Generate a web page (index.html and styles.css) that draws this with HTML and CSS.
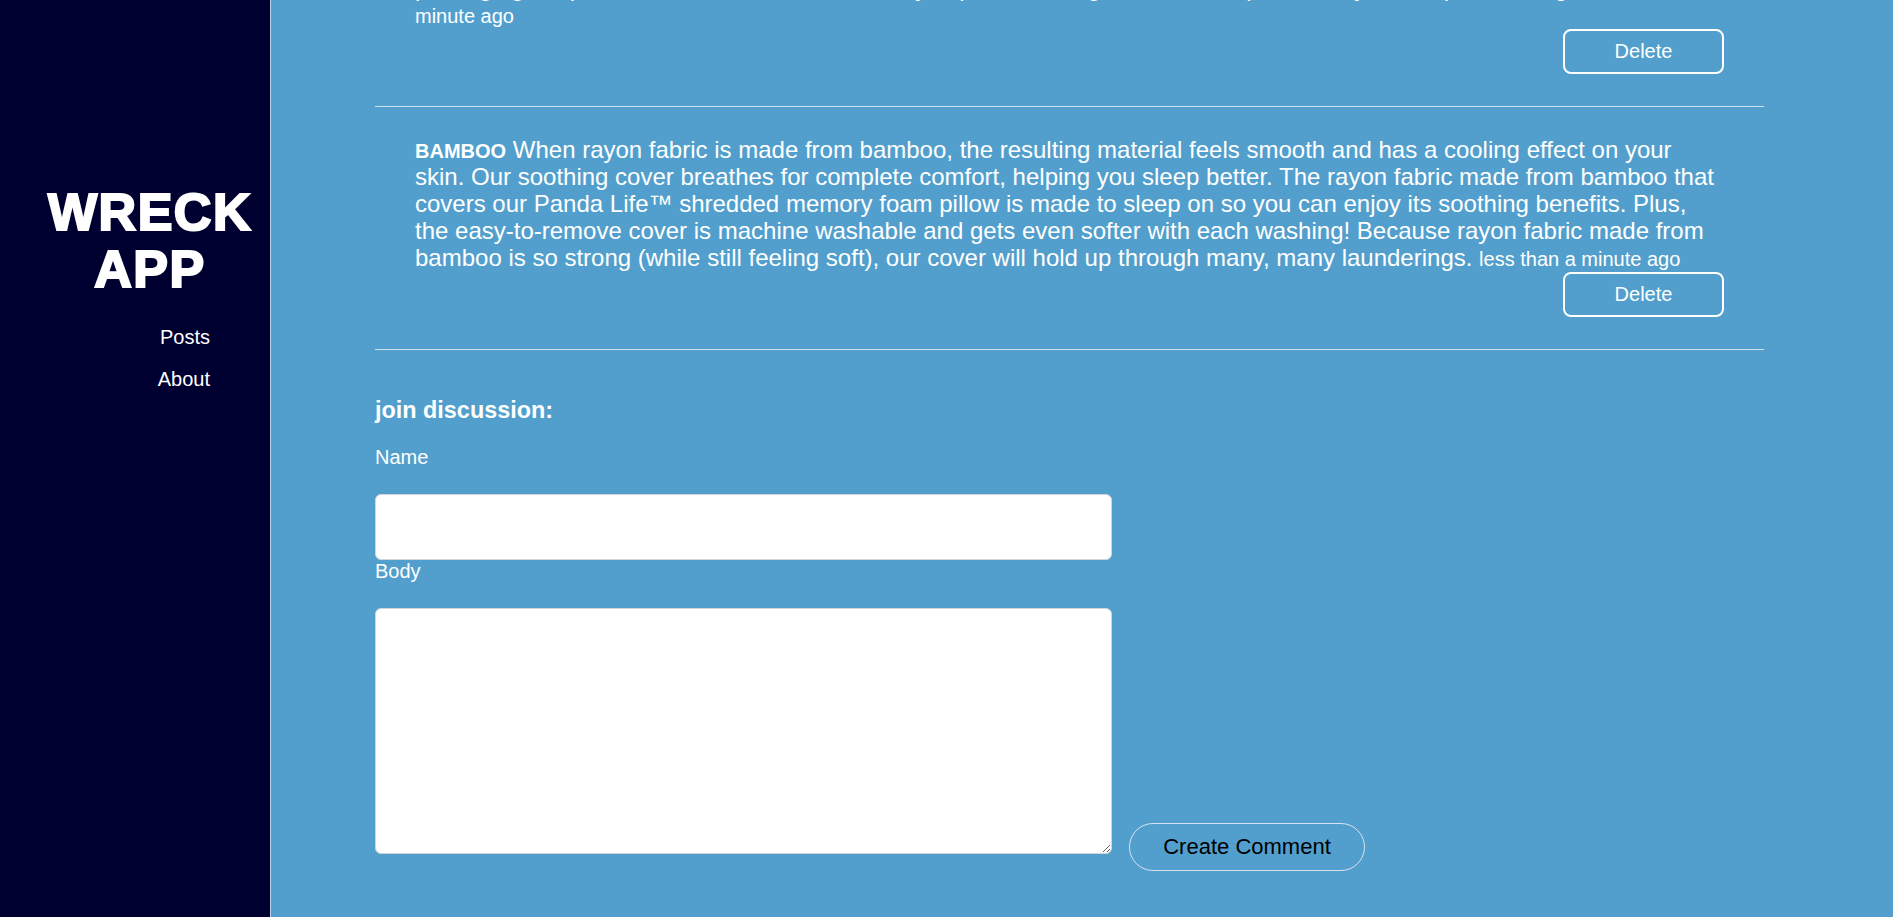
FILE: index.html
```html
<!DOCTYPE html>
<html lang="en">
<head>
<meta charset="utf-8">
<title>Wreck App</title>
<link rel="stylesheet" href="styles.css">
</head>
<body>
<div class="app">
  <aside class="sidebar">
    <h1 class="logo"><span>WRECK</span><span>APP</span></h1>
    <nav class="nav">
      <a href="#" class="nav-link">Posts</a>
      <a href="#" class="nav-link">About</a>
    </nav>
  </aside>
  <main class="main">
    <div class="content">
      <ul class="comments">
        <li class="comment">
          <p class="comment-text"><strong class="author">PANDA</strong> Our Panda Life™ shredded memory foam pillow arrives vacuum sealed and rolled for delivery in recyclable packaging, so please allow it a few hours to fully expand and regain its full shape before you sleep on it tonight. <span class="time">less than a minute ago</span></p>
          <div class="comment-actions"><button class="btn-delete" type="button">Delete</button></div>
        </li>
        <li class="comment">
          <p class="comment-text"><strong class="author">BAMBOO</strong> When rayon fabric is made from bamboo, the resulting material feels smooth and has a cooling effect on your skin. Our soothing cover breathes for complete comfort, helping you sleep better. The rayon fabric made from bamboo that covers our Panda Life™ shredded memory foam pillow is made to sleep on so you can enjoy its soothing benefits. Plus, the easy-to-remove cover is machine washable and gets even softer with each washing! Because rayon fabric made from bamboo is so strong (while still feeling soft), our cover will hold up through many, many launderings. <span class="time">less than a minute ago</span></p>
          <div class="comment-actions"><button class="btn-delete" type="button">Delete</button></div>
        </li>
      </ul>
      <form class="comment-form">
        <h3 class="form-title">join discussion:</h3>
        <label class="field-label" for="name">Name</label>
        <input class="field-input" id="name" type="text">
        <label class="field-label" for="body">Body</label>
        <div class="body-row"><textarea class="field-textarea" id="body"></textarea><button class="btn-create" type="submit">Create Comment</button></div>
      </form>
    </div>
  </main>
</div>
</body>
</html>
```
FILE: styles.css
```css
html, body {
  margin: 0;
  padding: 0;
  height: 100%;
}

body {
  font-family: "Liberation Sans", Arial, sans-serif;
  overflow: hidden;
}

.app {
  display: flex;
  height: 100vh;
}

.sidebar {
  box-sizing: border-box;
  width: 271px;
  flex: 0 0 271px;
  background: #000030;
  border-right: 1px solid #b9d3e8;
  display: flex;
  flex-direction: column;
  padding-top: 184px;
}

.logo {
  margin: 0;
  padding-left: 30px;
  display: flex;
  flex-direction: column;
  align-items: center;
  color: #fff;
  font-family: "Liberation Sans", Arial, sans-serif;
  font-weight: 900;
  font-size: 52px;
  line-height: 57px;
  -webkit-text-stroke: 2.2px #fff;
  letter-spacing: 1.5px;
}

.nav {
  display: flex;
  flex-direction: column;
  align-items: flex-end;
  gap: 19px;
  padding-right: 60px;
  margin-top: 28px;
}

.nav-link {
  color: #fff;
  text-decoration: none;
  font-size: 20px;
  line-height: 23px;
}

.main {
  flex: 1;
  background: #529fcd;
  overflow: hidden;
  color: #fff;
}

.content {
  margin: 0 129px 0 104px;
}

.comments {
  list-style: none;
  margin: -82px 0 0;
  padding: 0;
}

.comment {
  padding: 29px 40px 32px;
  border-bottom: 1px solid #d3e3ee;
}

.comment-text {
  margin: 0;
  font-size: 24px;
  line-height: 27px;
}

.author {
  font-size: 20px;
  font-weight: bold;
  line-height: 1;
}

.time {
  font-size: 20px;
  line-height: 1;
}

.comment-actions {
  display: flex;
  justify-content: flex-end;
  margin-top: 1px;
}

.btn-delete {
  box-sizing: border-box;
  width: 161px;
  height: 45px;
  margin: 0;
  background: transparent;
  border: 2px solid #fff;
  border-radius: 8px;
  color: #fff;
  font-family: "Liberation Sans", Arial, sans-serif;
  font-size: 20px;
  cursor: pointer;
}

.comment-form {
  padding-bottom: 46px;
}

.form-title {
  margin: 47px 0 22px;
  font-size: 23.4px;
  font-weight: bold;
}

.field-label {
  display: block;
  font-size: 20px;
  margin-bottom: 25px;
}

.field-input {
  display: block;
  box-sizing: border-box;
  width: 737px;
  height: 66px;
  margin: 0;
  border: 1px solid #cfd6dc;
  border-radius: 6px;
  background: #fff;
}

.body-row {
  font-size: 20px;
}

.field-textarea {
  box-sizing: border-box;
  width: 737px;
  height: 246px;
  margin: 0;
  border: 1px solid #cfd6dc;
  border-radius: 6px;
  background: #fff;
  vertical-align: baseline;
}

.btn-create {
  box-sizing: border-box;
  width: 236px;
  height: 48px;
  margin: 0 0 0 17px;
  background: transparent;
  border: 1px solid #d6e3ec;
  border-radius: 24px;
  color: #000;
  font-family: "Liberation Sans", Arial, sans-serif;
  font-size: 22px;
  cursor: pointer;
}
```
